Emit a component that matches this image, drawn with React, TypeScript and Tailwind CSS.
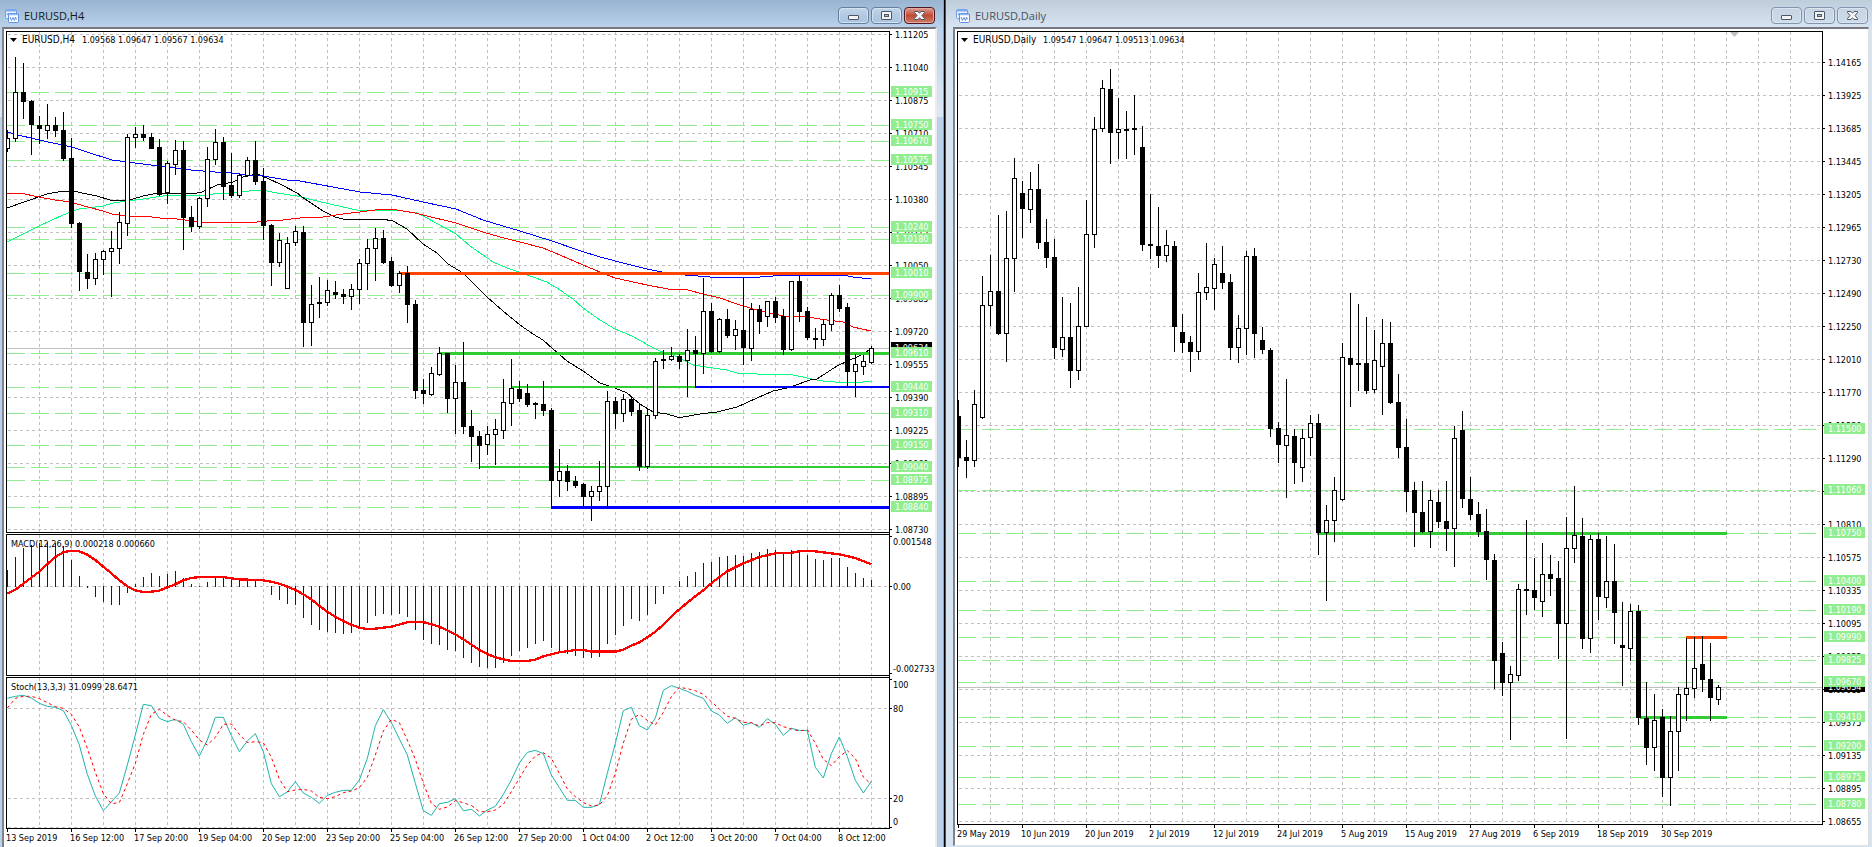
import React from "react";

type Candle = [high: number, top: number, bottom: number, low: number, hollow: 0 | 1];
type Level = { label: string; y: number };

const range = (from: number, to: number, step: number) =>
  Array.from({ length: Math.floor((to - from) / step) + 1 }, (_, i) => from + i * step);

const H4_CANDLES: Candle[] = [
  [130,138,148,151,1],[57,92,138,141,1],[63,92,101,118,0],[100,101,124,154,0],[116,125,128,143,0],
  [104,125,130,138,1],[117,125,130,136,0],[112,130,158,160,0],[138,158,223,227,0],[222,223,271,290,0],
  [254,272,278,288,0],[253,259,278,284,1],[250,251,259,274,1],[231,248,251,296,1],[212,222,248,263,1],
  [134,137,223,235,1],[127,134,137,147,1],[125,134,137,140,0],[133,137,148,148,0],[139,147,194,195,0],
  [161,163,192,203,1],[140,150,164,174,1],[141,150,217,249,0],[206,217,226,231,0],[197,198,226,228,1],
  [147,159,198,206,1],[129,142,159,164,1],[137,142,186,199,0],[153,185,195,197,0],[173,175,195,197,1],
  [157,160,175,176,1],[141,160,181,184,0],[168,181,225,239,0],[224,225,262,285,0],[233,240,262,266,1],
  [237,243,288,288,1],[226,231,242,245,1],[226,232,322,346,0],[285,304,322,345,1],[277,302,303,317,0],
  [280,290,302,305,1],[281,292,294,298,0],[289,294,296,303,0],[284,289,296,309,1],[259,263,289,303,1],
  [239,248,263,289,1],[228,238,248,280,1],[230,238,262,263,0],[257,261,285,286,0],[271,273,285,292,1],
  [266,273,304,322,0],[300,304,390,398,0],[379,390,393,403,0],[367,373,394,395,1],[347,353,374,375,1],
  [353,353,398,412,0],[365,382,398,433,1],[342,382,426,433,0],[410,426,436,461,0],[431,436,445,468,0],
  [426,434,444,454,1],[419,429,434,464,1],[379,402,430,438,1],[359,388,403,425,1],[381,389,398,401,0],
  [384,393,404,406,0],[402,403,404,418,0],[381,404,410,415,0],[408,410,480,507,0],[449,471,480,496,1],
  [465,471,481,490,0],[476,481,485,487,0],[483,484,496,506,0],[486,491,496,520,1],[461,486,491,500,1],
  [391,401,486,508,1],[397,401,413,428,0],[394,399,413,421,1],[396,399,411,415,0],[403,410,466,470,0],
  [408,415,466,468,1],[358,361,415,418,1],[350,359,360,368,0],[347,356,359,360,1],[354,356,361,368,0],
  [329,350,360,396,1],[336,350,353,387,0],[278,311,353,373,1],[303,311,351,352,0],[318,319,351,352,1],
  [309,319,335,337,0],[320,329,335,349,1],[277,330,347,364,0],[303,309,348,360,1],[305,309,321,333,0],
  [301,301,316,326,1],[297,301,317,322,0],[309,316,349,354,0],[281,281,349,350,1],[276,281,311,321,0],
  [307,311,337,339,0],[328,338,339,348,0],[319,324,339,345,1],[293,295,324,330,1],[285,295,308,311,0],
  [303,307,371,387,0],[354,364,371,396,1],[355,361,366,374,1],[346,348,362,363,1],
];

const DAILY_CANDLES: Candle[] = [
  [400,416,457,466,0],[440,457,460,477,0],[390,404,460,466,1],[276,305,417,418,1],[255,291,305,325,1],
  [215,291,333,334,0],[211,258,333,361,1],[158,178,258,291,1],[181,193,208,237,0],[172,189,209,222,1],
  [164,189,242,248,0],[219,242,257,267,0],[239,257,347,358,0],[297,337,349,356,1],[303,337,370,387,0],
  [287,326,370,379,1],[200,234,326,326,1],[117,129,234,247,1],[80,88,128,131,1],[69,89,132,163,0],
  [98,129,132,158,1],[111,129,130,158,0],[95,128,129,154,0],[126,147,244,250,0],[194,244,245,258,0],
  [207,246,255,267,0],[230,245,255,261,1],[241,246,326,351,0],[314,332,342,352,0],[336,342,351,371,0],
  [273,292,351,359,1],[243,287,292,299,1],[258,264,288,309,1],[246,273,282,288,0],[274,282,347,359,0],
  [315,328,347,362,1],[251,256,328,354,1],[248,256,333,357,0],[327,340,349,353,0],[348,350,428,436,0],
  [422,428,444,462,0],[379,435,445,497,1],[429,436,462,483,0],[429,438,467,481,1],[415,423,437,455,1],
  [414,423,532,554,0],[505,520,532,600,1],[477,490,520,541,1],[343,357,499,500,1],[293,358,364,406,0],
  [304,363,364,390,0],[317,363,390,393,0],[330,360,389,392,1],[319,343,366,414,1],[322,343,402,403,0],
  [374,402,447,457,0],[419,447,491,511,0],[482,490,512,546,0],[481,512,531,532,0],[490,500,531,547,1],
  [490,502,521,527,0],[481,521,528,550,0],[426,438,528,566,1],[411,430,498,507,0],[477,499,514,519,0],
  [502,514,531,536,0],[509,531,559,579,0],[554,560,660,688,0],[642,653,682,695,0],[666,674,682,739,1],
  [584,589,675,680,1],[520,589,590,614,0],[558,590,597,609,0],[543,574,601,616,1],[555,574,578,595,0],
  [561,578,623,658,0],[517,548,623,738,1],[486,535,548,562,1],[518,536,638,648,0],[535,539,638,652,1],
  [533,539,596,619,0],[536,581,597,607,1],[544,581,612,643,0],[602,645,647,685,0],[604,611,648,660,1],
  [605,611,717,724,0],[682,718,747,764,0],[694,720,747,770,1],[709,717,777,796,0],[716,731,777,805,1],
  [687,694,731,770,1],[638,688,694,720,1],[637,668,688,697,1],[636,664,679,691,0],[643,679,697,720,0],
  [685,687,699,704,1],
];

/* Histogram ends, in thirds of a pixel below the top of the indicator panes. */
const MACD_BARS = [
  135,96,70,60,55,52,54,63,105,153,188,216,231,240,240,204,177,156,144,153,147,138,159,177,183,171,157,157,
  166,163,163,166,184,210,225,237,240,279,300,315,321,324,327,324,306,294,273,267,270,267,276,315,345,357,
  360,375,378,399,414,426,429,429,414,393,378,369,357,348,369,378,387,393,399,399,396,357,330,303,282,288,
  270,237,207,184,168,153,141,114,111,96,93,90,93,84,81,72,75,81,75,81,90,102,105,99,99,126,144,159,165,
];

const MACD_SIGNAL_A =
  "22,205 45,195 70,176 94,158 118,140 142,117 166,96 190,82 214,77 238,79 262,89 286,105 310,125 334,145 358,166 382,184 406,196 430,201 454,200 478,197 502,187 526,178 550,166 574,159 600,156 670,156 694,160 718,163 790,166 814,170 838,176 862,185 886,195 910,208 934,223 958,242 982,260 1006,275 1030,288 1054,299 1078,308 1102,312 1126,311 1174,305 1222,292 1246,290 1270,291 1318,305 1366,328 1390,343 1415,359";
const MACD_SIGNAL_B =
  "5,359 28,375 52,387 76,397 100,403 124,408 172,408 196,404 220,394 268,382 316,375 340,375 364,380 436,380 460,374 484,362 508,352 532,337 556,320 580,299 604,274 628,253 652,233 676,214 700,196 724,175 748,156 772,139 820,115 868,96 916,85 960,84 988,79 1036,79 1060,82 1108,88 1156,99 1204,118";

const STOCH_MAIN_A =
  "22,520 46,514 70,511 94,519 118,535 142,544 166,547 190,557 214,601 238,660 262,748 286,813 310,857 358,804 382,720 406,630 430,538 454,542 478,580 502,590 526,583 550,598 574,650 598,693 622,645 646,577 670,577 694,632 718,680 742,648 766,626 790,680 814,776 838,815 862,801 886,770 910,804 934,817 958,835 982,811 1006,802 1030,796 1054,796 1078,765 1102,700 1126,602 1150,554 1174,593 1222,690 1246,775 1270,857 1294,871 1318,836 1342,832 1366,821 1390,857 1415,853";
const STOCH_MAIN_B =
  "5,853 28,873 52,855 76,844 100,808 124,765 148,714 172,682 196,676 220,686 244,750 268,788 292,826 316,826 340,847 364,847 388,839 412,745 436,655 460,557 484,547 508,602 532,615 556,579 580,496 604,482 628,490 652,499 676,511 700,520 724,558 748,570 772,595 796,578 820,601 844,593 868,607 892,581 916,598 940,631 964,610 988,616 1012,617 1036,727 1060,759 1084,686 1108,636 1132,695 1156,766 1180,804 1204,769";
const STOCH_SIGNAL_A =
  "22,549 46,520 70,514 94,514 118,521 142,533 166,545 190,550 214,568 238,606 262,670 286,742 310,806 334,836 358,833 382,776 406,715 430,628 454,568 478,553 502,571 526,586 550,590 574,615 598,645 622,660 646,637 670,598 694,597 718,628 742,653 766,650 790,653 814,697 838,762 862,800 886,795 910,793 934,798 958,817 982,821 1006,815 1030,803 1054,798 1078,788 1102,757 1126,690 1150,618 1174,583 1198,593 1222,645 1246,703 1270,775 1294,835 1318,853 1342,846 1366,827 1390,833 1415,842";
const STOCH_SIGNAL_B =
  "5,842 28,860 52,860 76,855 100,838 124,800 148,760 172,720 196,693 220,683 244,700 268,745 292,792 316,815 340,833 364,843 388,840 412,812 436,745 460,654 484,583 508,568 532,586 556,600 580,562 604,515 628,487 652,491 676,497 700,508 724,530 748,552 772,574 796,580 820,592 844,593 868,603 892,593 916,593 940,605 964,612 988,618 1012,614 1036,655 1060,703 1084,722 1108,695 1132,677 1156,700 1180,756 1204,778";

const MOVING_AVERAGES = [
  {
    color: "#00ff7f",
    points:
      "7,242 39,226 63,215 79,209 103,206 113,203 127,201 143,199 163,196 177,195 200,196 213,194 233,193 257,190 267,191 277,193 297,196 317,201 343,207 357,210 387,210 403,211 417,213 427,218 456,234 470,246 493,262 507,268 530,276 547,282 560,290 573,299 583,308 600,320 615,329 632,336 648,345 660,351 673,355 683,360 693,365 713,368 727,370 737,373 757,374 773,374 793,375 817,380 823,381 847,383 863,382 871,381",
  },
  {
    color: "#000000",
    points:
      "7,208 27,201 47,194 63,191 73,191 87,194 97,196 110,200 119,201 133,199 143,196 153,194 180,193 192,194 202,192 217,185 233,182 243,177 257,174 267,178 282,185 297,193 305,199 323,211 335,217 343,219 367,219 382,219 393,221 407,229 423,244 437,253 448,264 463,273 473,283 487,297 503,311 520,325 533,334 543,340 553,349 567,361 583,371 600,383 615,388 627,393 640,404 653,412 667,414 677,417 683,417 700,414 717,412 737,407 757,398 773,391 787,388 793,386 810,380 817,379 837,366 850,360 857,357 871,349",
  },
  {
    color: "#ff0000",
    points:
      "7,193 20,193 39,197 55,200 70,202 88,207 103,211 112,214 119,215 130,216 143,216 160,218 177,219 192,221 200,222 257,222 267,221 283,220 300,218 323,217 343,214 360,212 382,209 397,210 415,213 423,215 456,223 483,232 500,237 520,242 543,248 560,255 583,265 600,272 615,278 647,285 668,289 688,290 703,294 720,298 737,304 753,309 770,313 783,316 800,316 827,320 843,322 853,327 871,331",
  },
  {
    color: "#0000ff",
    points:
      "7,132 22,136 31,138 48,142 72,147 90,153 112,160 135,163 159,166 191,170 215,172 231,173 247,175 263,176 287,180 300,181 333,187 360,192 392,195 423,202 456,209 483,220 503,226 520,231 552,241 578,250 600,257 627,264 647,269 662,272 685,275 710,277 760,277 787,275 843,275 853,277 871,279",
  },
];

const H4_LEVELS: Level[] = [
  "1.10915","1.10750","1.10670","1.10575","1.10240","1.10180","1.10010","1.09900",
  "1.09610","1.09440","1.09310","1.09150","1.09040","1.08975","1.08840",
].map((label) => ({ label, y: Math.round(34 + (1.11205 - Number(label)) * 20000) }));

const H4_PRICES: Level[] = [
  "1.11205","1.11040","1.10875","1.10710","1.10545","1.10380","1.10215","1.10050",
  "1.09885","1.09720","1.09555","1.09390","1.09225","1.09060","1.08895","1.08730",
].map((label, i) => ({ label, y: 34 + i * 33 }));

const H4_DATES = [
  "13 Sep 2019","16 Sep 12:00","17 Sep 20:00","19 Sep 04:00","20 Sep 12:00","23 Sep 20:00","25 Sep 04:00",
  "26 Sep 12:00","27 Sep 20:00","1 Oct 04:00","2 Oct 12:00","3 Oct 20:00","7 Oct 04:00","8 Oct 12:00",
];

const DAILY_LEVELS: Level[] = [
  { label: "1.11500", y: 429 },{ label: "1.11060", y: 490 },{ label: "1.10750", y: 533 },
  { label: "1.10400", y: 581 },{ label: "1.10190", y: 610 },{ label: "1.09990", y: 637 },
  { label: "1.09825", y: 660 },{ label: "1.09670", y: 682 },{ label: "1.09410", y: 717 },
  { label: "1.09200", y: 746 },{ label: "1.08975", y: 777 },{ label: "1.08780", y: 804 },
];

const DAILY_PRICES: Level[] = [
  "1.14165","1.13925","1.13685","1.13445","1.13205","1.12965","1.12730","1.12490",
  "1.12250","1.12010","1.11770","1.11530","1.11290","1.11050","1.10810","1.10575",
  "1.10335","1.10095","1.09855","1.09615","1.09375","1.09135","1.08895","1.08655",
].map((label, i) => ({ label, y: 62 + i * 33 }));

const DAILY_DATES = [
  "29 May 2019","10 Jun 2019","20 Jun 2019","2 Jul 2019","12 Jul 2019","24 Jul 2019",
  "5 Aug 2019","15 Aug 2019","27 Aug 2019","6 Sep 2019","18 Sep 2019","30 Sep 2019",
];

function Grid({ xs, ys, left, right, top, bottom }: {
  xs: number[]; ys: number[]; left: number; right: number; top: number; bottom: number;
}) {
  return (
    <g stroke="#c0c0c0" strokeDasharray="3 3">
      {ys.map((y) => <path key={`h${y}`} d={`M${left} ${y + 0.5}H${right}`} />)}
      {xs.map((x) => <path key={`v${x}`} d={`M${x + 0.5} ${top}V${bottom}`} />)}
    </g>
  );
}

function LevelLines({ levels, left, right }: { levels: Level[]; left: number; right: number }) {
  return (
    <g stroke="#90ee90" strokeDasharray="18 6">
      {levels.map(({ y }) => <path key={y} d={`M${left} ${y + 0.5}H${right}`} />)}
    </g>
  );
}

function Candles({ data, start }: { data: Candle[]; start: number }) {
  return (
    <g stroke="#000">
      {data.map(([high, top, bottom, low, hollow], i) => {
        const x = start + i * 8 + 0.5;
        return (
          <g key={i}>
            <path d={`M${x} ${high}V${low + 1}`} />
            <rect x={x - 2} y={top + 0.5} width={4} height={bottom - top} fill={hollow ? "#fff" : "#000"} />
          </g>
        );
      })}
    </g>
  );
}

function PriceScale({ axis, prices, levels, current }: {
  axis: number; prices: Level[]; levels: Level[]; current: Level;
}) {
  return (
    <g>
      <path
        d={prices.map(({ y }) => `M${axis} ${y + 0.5}h3`).join("")}
        stroke="#000"
        shapeRendering="crispEdges"
      />
      {prices.map(({ label, y }) => <text key={label} x={axis + 6} y={y + 4}>{label}</text>)}
      <rect x={axis + 2} y={current.y - 6} width={41} height={11} fill="#000" />
      <text x={axis + 6} y={current.y + 3} fill="#fff">{current.label}</text>
      {levels.map(({ label, y }) => (
        <g key={label}>
          <rect x={axis + 2} y={y - 6} width={41} height={11} fill="#90ee90" />
          <text x={axis + 6} y={y + 3} fill="#fff">{label}</text>
        </g>
      ))}
    </g>
  );
}

function DateScale({ dates, start, y }: { dates: string[]; start: number; y: number }) {
  return (
    <g>
      {dates.map((d, i) => (
        <g key={d}>
          <path d={`M${start + i * 64 + 0.5} ${y}v3`} stroke="#000" shapeRendering="crispEdges" />
          <text x={start - 1 + i * 64} y={y + 12}>{d}</text>
        </g>
      ))}
    </g>
  );
}

const chartText = "block h-auto w-full bg-white font-['DejaVu_Sans_Condensed','Noto_Sans',sans-serif] text-[9px]";

function H4Chart() {
  return (
    <svg viewBox="6 31 929 816" className={chartText} role="img" aria-label="EURUSD,H4 chart">
      <g fill="none" shapeRendering="crispEdges">
        <Grid xs={range(39, 871, 32)} ys={H4_PRICES.map((p) => p.y)} left={8} right={889} top={32} bottom={532} />
        <Grid xs={range(39, 871, 32)} ys={[586]} left={8} right={889} top={535} bottom={675} />
        <Grid xs={range(39, 871, 32)} ys={[708, 798, 827]} left={8} right={889} top={678} bottom={828} />
        <LevelLines levels={H4_LEVELS} left={7} right={889} />
        <path d="M7 348.5H889" stroke="#c0c0c0" />
        {MOVING_AVERAGES.map(({ color, points }) => (
          <polyline key={color} points={points} stroke={color} />
        ))}
        <path d="M439 353.5H889" stroke="#32cd32" strokeWidth="3" />
        <path d="M512 387H695M479 467H889" stroke="#32cd32" strokeWidth="2" />
        <path d="M400 273.5H889" stroke="#ff4500" strokeWidth="3" />
        <path d="M551 507.5H889" stroke="#0000ff" strokeWidth="3" />
        <path d="M695 387H889" stroke="#0000ff" strokeWidth="2" />
        <Candles data={H4_CANDLES} start={7} />
        <path
          d={MACD_BARS.map((v, i) => `M${7.5 + i * 8} ${v < 184 ? 587 : 586}V${525 + Math.round(v / 3)}`).join("")}
          stroke="#0000ff"
        />
      </g>
      <g fill="none" strokeLinejoin="round" shapeRendering="crispEdges">
        <g transform="translate(0 525) scale(0.333333)">
          <polyline points={MACD_SIGNAL_A} stroke="#f00" strokeWidth="7" />
          <polyline points={STOCH_MAIN_A} stroke="#20b2aa" strokeWidth="3" />
          <polyline points={STOCH_SIGNAL_A} stroke="#f00" strokeWidth="3" strokeDasharray="9 9" />
        </g>
        <g transform="translate(470 525) scale(0.333333)">
          <polyline points={MACD_SIGNAL_B} stroke="#f00" strokeWidth="7" />
          <polyline points={STOCH_MAIN_B} stroke="#20b2aa" strokeWidth="3" />
          <polyline points={STOCH_SIGNAL_B} stroke="#f00" strokeWidth="3" strokeDasharray="9 9" />
        </g>
      </g>
      <path
        d="M6.5 31V533M6.5 534V676M6.5 677V829M889.5 31V829M6 31.5H890M6 532.5H890M6 534.5H890M6 675.5H890M6 677.5H890M6 828.5H890M889 536.5h3M889 586.5h3M889 673.5h3M889 679.5h3M889 708.5h3M889 798.5h3M889 827.5h3"
        stroke="#000"
        fill="none"
        shapeRendering="crispEdges"
      />
      <path d="M10 38h7l-3.500 4z" />
      <text x={22} y={43} className="text-[10px]">EURUSD,H4</text>
      <text x={82} y={43}>1.09568 1.09647 1.09567 1.09634</text>
      <text x={11} y={547}>MACD(12,26,9) 0.000218 0.000660</text>
      <text x={11} y={690}>Stoch(13,3,3) 31.0999 28.6471</text>
      <PriceScale axis={889} prices={H4_PRICES} levels={H4_LEVELS} current={{ label: "1.09634", y: 348 }} />
      <text x={893} y={545}>0.001548</text>
      <text x={893} y={590}>0.00</text>
      <text x={893} y={672}>-0.002733</text>
      <text x={893} y={688}>100</text>
      <text x={893} y={712}>80</text>
      <text x={893} y={802}>20</text>
      <text x={893} y={825}>0</text>
      <DateScale dates={H4_DATES} start={7} y={829} />
    </svg>
  );
}

function DailyChart() {
  return (
    <svg viewBox="957 31 911 814" className={chartText} role="img" aria-label="EURUSD,Daily chart">
      <g fill="none" shapeRendering="crispEdges">
        <Grid xs={range(990, 1790, 32)} ys={DAILY_PRICES.map((p) => p.y)} left={959} right={1822} top={32} bottom={824} />
        <LevelLines levels={DAILY_LEVELS} left={958} right={1820} />
        <path d="M958 687.5H1822" stroke="#c0c0c0" />
        <path d="M1317 533.5H1727M1640 717.5H1727" stroke="#32cd32" strokeWidth="3" />
        <path d="M1686 637.5H1727" stroke="#ff4500" strokeWidth="3" />
        <Candles data={DAILY_CANDLES} start={958} />
        <path d="M957.500 31V825M1822.500 31V825M957 31.500H1823M957 824.500H1823" stroke="#000" />
      </g>
      <path d="M1730 32h9l-4.500 5z" fill="#c0c0c0" />
      <path d="M961 38h7l-3.500 4z" />
      <text x={973} y={43} className="text-[10px]">EURUSD,Daily</text>
      <text x={1043} y={43}>1.09547 1.09647 1.09513 1.09634</text>
      <PriceScale axis={1822} prices={DAILY_PRICES} levels={DAILY_LEVELS} current={{ label: "1.09634", y: 687 }} />
      <DateScale dates={DAILY_DATES} start={958} y={825} />
    </svg>
  );
}

function ChartIcon() {
  return (
    <svg viewBox="0 0 14 14" className="size-3.5" aria-hidden="true">
      <rect x="0.500" y="0.500" width="11" height="9" rx="1" fill="#e8f2ff" stroke="#6f9fe8" />
      <path d="M1 1.500h10" stroke="#7eabee" strokeWidth="2" />
      <path d="M2 6l1.500-2 1 2" fill="none" stroke="#4f86de" />
      <rect x="3.500" y="4.500" width="10" height="9" rx="1" fill="#fff" stroke="#5a8fe2" />
      <path d="M4 5.500h9" stroke="#8fb8f2" strokeWidth="1.500" />
      <path d="M5 8l1.500 3.500L8 8.500l1.500 3 1-3.500 1 2.500" fill="none" stroke="#4f86de" strokeWidth="0.900" />
    </svg>
  );
}

const glyph = { fill: "#f4f4f4", stroke: "#4b5666" };

function WindowButtons({ active }: { active: boolean }) {
  const base = "flex h-[17px] w-[31px] items-center justify-center rounded-sm border";
  const plain = active
    ? "border-[#64809f] bg-linear-to-b from-[#c3d6ea] via-[#b4cae2] via-45% to-[#a9c4e0] shadow-[inset_0_0_0_1px_#d5e3f1]"
    : "border-[#8294ad] bg-linear-to-b from-[#c5d3e3] to-[#cfdcea] shadow-[inset_0_0_0_1px_#dbe5f0]";
  const close = active
    ? "border-[#4e1721] bg-linear-to-b from-[#dc9c90] via-[#c04a32] via-50% to-[#cf7d68] shadow-[inset_0_0_0_1px_#e3a99e]"
    : plain;
  return (
    <div className="flex gap-0.5">
      <button type="button" aria-label="Minimize" className={`${base} ${plain}`}>
        <svg viewBox="0 0 11 9" className="h-[9px] w-[11px]">
          <rect x="0.500" y="4.500" width="10" height="4" rx="0.500" {...glyph} />
        </svg>
      </button>
      <button type="button" aria-label="Maximize" className={`${base} ${plain}`}>
        <svg viewBox="0 0 11 9" className="h-[9px] w-[11px]">
          <rect x="0.500" y="0.500" width="10" height="8" rx="0.500" {...glyph} />
          <rect x="3.500" y="3.500" width="4" height="2" fill="#a9c0dc" stroke="#4b5666" />
        </svg>
      </button>
      <button type="button" aria-label="Close" className={`${base} ${close}`}>
        <svg viewBox="0 0 11 9" className="h-[9px] w-[11px]">
          <path
            d="M0.500 0.500h3.500l1.500 1.700 1.500-1.700h3.500v1L8 4.500l2.500 3v1H7L5.500 6.800 4 8.500H0.500v-1l2.500-3-2.500-3z"
            {...glyph}
          />
        </svg>
      </button>
    </div>
  );
}

export default function App() {
  return (
    <main className="grid grid-cols-[945fr_927fr] bg-white">
      <section className="flex min-w-0 flex-col border-r border-black">
        <div className="flex grow flex-col border-r border-[#2ec8e8] bg-[#b9d1ea]">
          <header className="flex h-[27px] items-center justify-between bg-linear-to-b from-[#99b4d1] to-[#b9d1ea] pt-1 pr-2 pl-[5px]">
            <div className="flex items-center gap-[5px]">
              <ChartIcon />
              <h1 className="font-['Open_Sans',sans-serif] text-[11px] leading-4 text-[#101820]">EURUSD,H4</h1>
            </div>
            <WindowButtons active />
          </header>
          <div className="grow bg-[linear-gradient(#b9d1ea,#dce9f7_90px,#b9d1ea_90px)] pr-1.5 pl-0.5">
            <div className="h-full border-t-2 border-r-2 border-l-2 border-t-[#77777f] border-r-[#ececec] border-l-[#80838a] bg-white pt-0.5 pl-0.5">
              <H4Chart />
            </div>
          </div>
        </div>
      </section>
      <section className="flex min-w-0 flex-col border-l border-[#4a4f55] bg-[#d7e4f2]">
        <header className="flex h-[27px] items-center justify-between bg-linear-to-b from-[#bfcddb] to-[#d7e4f2] pt-1 pr-1 pl-2.5">
          <div className="flex items-center gap-[5px]">
            <ChartIcon />
            <h2 className="font-['Open_Sans',sans-serif] text-[11px] leading-4 text-[#46505c]">EURUSD,Daily</h2>
          </div>
          <WindowButtons active={false} />
        </header>
        <div className="grow pr-[3px] pb-px pl-[7px]">
          <div className="h-full border-t-2 border-r border-b border-l-2 border-t-[#77777f] border-r-[#dcdcdc] border-b-[#e3e3e3] border-l-[#80838a] bg-white pt-0.5 pl-0.5">
            <DailyChart />
          </div>
        </div>
      </section>
    </main>
  );
}
